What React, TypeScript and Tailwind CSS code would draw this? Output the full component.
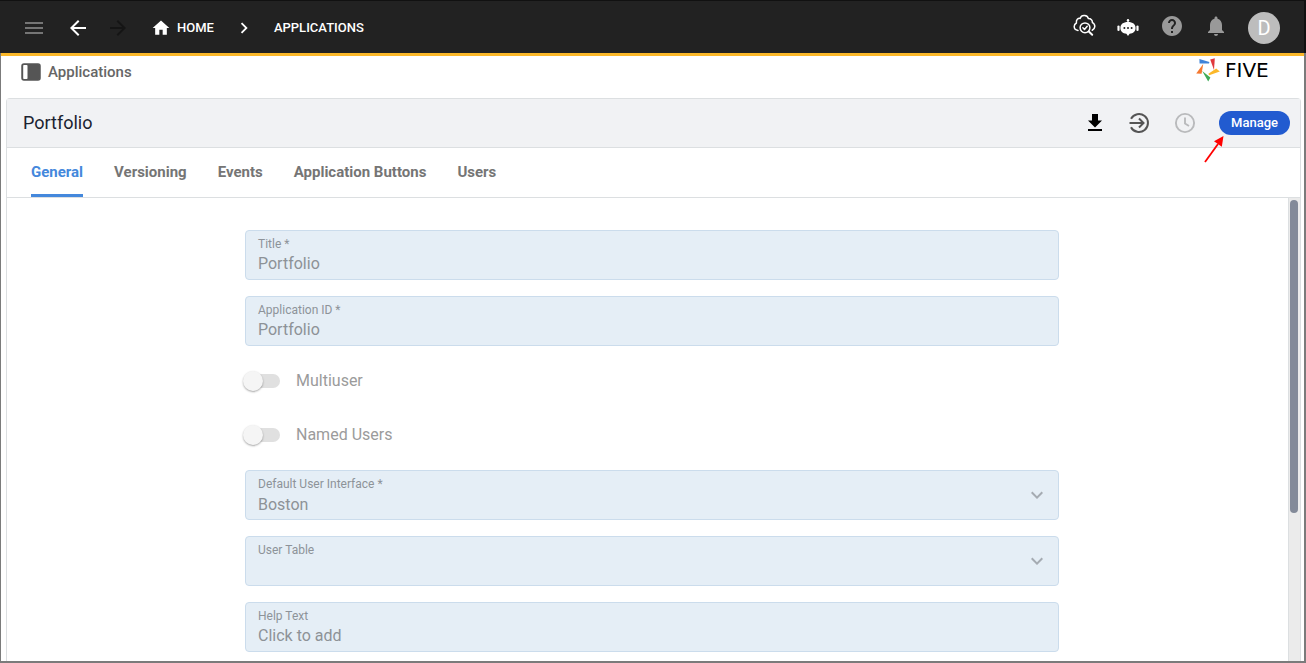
import React, { useState } from 'react';
import {
  MdArrowBack,
  MdArrowForward,
  MdChevronRight,
  MdExpandMore,
  MdHelp,
  MdHome,
  MdMenu,
  MdNotifications,
} from 'react-icons/md';

const tabs = ['General', 'Versioning', 'Events', 'Application Buttons', 'Users'];

const CloudSearchIcon = () => (
  <svg width="24" height="24" viewBox="0 0 24 24" fill="none" stroke="white" strokeWidth="1.5" strokeLinecap="round" strokeLinejoin="round">
    <path d="M6 16.400C3.800 16.200 2.200 14.600 2.200 12.600C2.200 10.800 3.200 9.600 4.400 9C4 5.800 6 4 8.200 4.400C8.800 2.400 10.600 1.400 12.600 1.600C14.600 1.800 16 3 16.400 4.600C19 4.600 20.600 6.400 20.400 8.600C22 9.400 22.900 10.800 22.800 12.600C22.600 14.400 21.600 15.600 20.200 16.200" />
    <circle cx="13" cy="13.800" r="4.900" />
    <path d="M16.800 17.600L20.200 20.800" strokeWidth="2" />
    <path d="M10.900 13.800L12.500 15.400L15.200 12.200" />
  </svg>
);

const BotIcon = () => (
  <svg width="24" height="24" viewBox="0 0 24 24" fill="white">
    <circle cx="12" cy="6.300" r="1.200" />
    <rect x="11.400" y="6" width="1.200" height="4" />
    <path d="M12 8c4.800 0 7.600 2.200 7.600 6 0 3.400-2.400 5.400-6 5.800L12 22l-1.600-2.200C6.800 19.400 4.400 17.400 4.400 14 4.400 10.200 7.200 8 12 8z" />
    <rect x="1.400" y="11.400" width="2.200" height="5.600" rx="1.100" />
    <rect x="20.400" y="11.400" width="2.200" height="5.600" rx="1.100" />
    <g fill="#222222">
      <circle cx="8.400" cy="14" r="1" />
      <circle cx="12" cy="14" r="1" />
      <circle cx="15.600" cy="14" r="1" />
    </g>
  </svg>
);

const PanelIcon = () => (
  <svg width="20" height="18" viewBox="0 0 20 18">
    <rect x="1" y="1" width="18" height="16" rx="2" fill="#555555" stroke="#555555" strokeWidth="1.500" />
    <rect x="2.200" y="2" width="4.300" height="14" rx="0.800" fill="white" />
  </svg>
);

const FiveMark = () => (
  <svg width="24" height="24" viewBox="0 0 24 24" className="shrink-0">
    <path d="M3.400 1L13.400 4L13 5.600L3.600 5.400z" fill="#3f83d8" />
    <path d="M18.800 0.200L18 12L14.200 1.600z" fill="#e0393e" />
    <path d="M23.800 13.600L13.200 17.200L12.400 15.800L20.200 10.600z" fill="#fbb829" />
    <path d="M6.200 13L14.400 19.400L12.200 23.600L10.800 21z" fill="#3fab58" />
    <path d="M7.200 6L5.600 15.800L0.200 15.400z" fill="#f5782f" />
  </svg>
);

const DownloadIcon = () => (
  <svg width="24" height="24" viewBox="0 0 24 24" fill="black">
    <path d="M19 9.500h-4V3H9v6.500H5l7 7z" />
    <rect x="5" y="18" width="14" height="2" />
  </svg>
);

const DeployIcon = () => (
  <svg width="24" height="24" viewBox="0 0 24 24" fill="none" stroke="#555555" strokeWidth="2">
    <path d="M4 7.800A9 9 0 1 1 4 16.200" />
    <path d="M2.500 12H16" />
    <path d="M12 7.500L16.500 12L12 16.500" />
  </svg>
);

const ClockIcon = () => (
  <svg width="24" height="24" viewBox="0 0 24 24" fill="none" stroke="#b9babc" strokeWidth="1.900">
    <circle cx="12" cy="12" r="9.100" />
    <path d="M12 6.500V12.500L16 15" />
  </svg>
);

const fieldBox = 'relative h-[50px] rounded border border-[#cbdcec] bg-[#e5eef6]';
const fieldLabel = 'absolute left-3 top-[5px] text-xs leading-4 text-[#8d9399]';
const fieldControl =
  'h-full w-full appearance-none bg-transparent px-3 text-base text-[#8d9297] opacity-100 placeholder:text-[#8d9297] outline-none';

const TextField = ({ id, label, value = '', placeholder }: { id: string, label: string, value?: string, placeholder?: string }) => (
  <div className={fieldBox}>
    <label htmlFor={id} className={fieldLabel}>{label}</label>
    <input id={id} type="text" value={value} placeholder={placeholder} disabled className={`${fieldControl} pt-4`} />
  </div>
);

const SelectField = ({ id, label, value = '' }: { id: string, label: string, value?: string }) => (
  <div className={fieldBox}>
    <label htmlFor={id} className={fieldLabel}>{label}</label>
    <select id={id} value={value} disabled className={`${fieldControl} pt-5`}>
      <option value={value}>{value}</option>
    </select>
    <MdExpandMore size={24} className="pointer-events-none absolute right-[9px] top-3 text-[#a5abb2]" />
  </div>
);

const SwitchField = ({ id, label }: { id: string, label: string }) => (
  <div className="flex h-[38px] items-center">
    <span className="relative flex h-5 w-[35px] items-center">
      <input
        id={id}
        type="checkbox"
        role="switch"
        disabled
        className="h-3.5 w-full appearance-none rounded-full bg-[#e0e0e0]"
      />
      <span className="absolute -left-0.5 top-0 size-5 rounded-full bg-[#f5f5f5] shadow-[0_1px_2px_rgba(0,0,0,0.35)]"></span>
    </span>
    <label htmlFor={id} className="ml-4 text-base text-[#9b9b9b]">{label}</label>
  </div>
);

const TopBar = () => (
  <header className="flex h-[53px] shrink-0 items-stretch justify-between border-t border-r-2 border-[#111111] bg-[#222222] pt-0.5 pl-[22px] pr-6 text-white">
    <nav className="flex items-center text-[13px] font-medium">
      <button aria-label="Menu" className="text-[#757575]"><MdMenu size={24} /></button>
      <button aria-label="Back" className="ml-5"><MdArrowBack size={24} /></button>
      <button aria-label="Forward" className="ml-4 text-[#151515]"><MdArrowForward size={24} /></button>
      <a href="#home" className="ml-[21px] flex items-center gap-1.5">
        <MdHome size={20} />
        HOME
      </a>
      <MdChevronRight size={22} className="ml-[19px]" />
      <a href="#applications" className="ml-[19px]">APPLICATIONS</a>
    </nav>
    <div className="flex items-center">
      <div className="flex items-center gap-5 pb-1">
        <button aria-label="Inspect"><CloudSearchIcon /></button>
        <button aria-label="Assistant"><BotIcon /></button>
        <button aria-label="Help" className="text-[#999999]"><MdHelp size={24} /></button>
        <button aria-label="Notifications" className="text-[#999999]"><MdNotifications size={24} /></button>
      </div>
      <button aria-label="Account" className="ml-5 size-8 rounded-full bg-[#bdbdbd] text-xl leading-8">D</button>
    </div>
  </header>
);

const App = () => {
  const [activeTab, setActiveTab] = useState('General');

  return (
    <div className="flex h-screen flex-col overflow-hidden bg-white font-[Roboto,sans-serif]">
      <TopBar />
      <div className="flex min-h-0 flex-1 flex-col border-b-2 border-l border-r-2 border-[#7b7b7b]">
        <div className="h-[3px] shrink-0 bg-[#fbb829]"></div>
        <div className="flex h-[42px] shrink-0 items-start justify-between px-5">
          <div className="flex h-8 items-center gap-[7px] text-[#666666]">
            <PanelIcon />
            <span className="text-[15px] font-medium">Applications</span>
          </div>
          <div className="flex h-7 w-[88px] items-center gap-[5px]">
            <FiveMark />
            <span className="font-['DejaVu_Sans',sans-serif] text-xl leading-6 text-black">FIVE</span>
          </div>
        </div>

        <main className="ml-[5px] mr-[3px] flex min-h-0 flex-1 flex-col rounded-t border border-b-0 border-[#dcdfe1]">
          <div className="flex h-[49px] shrink-0 items-center justify-between border-b border-[#dcdfe1] bg-[#f1f2f4] pl-4 pr-2.5">
            <h1 className="text-lg text-[#1b2230]">Portfolio</h1>
            <div className="flex items-center">
              <button aria-label="Download"><DownloadIcon /></button>
              <button aria-label="Deploy" className="ml-5"><DeployIcon /></button>
              <button aria-label="History" className="ml-[22px]"><ClockIcon /></button>
              <div className="relative ml-[22px]">
                <button className="block h-6 w-[71px] rounded-full bg-[#225bd0] text-[13px] font-medium text-white">Manage</button>
                <svg className="pointer-events-none absolute -left-4 top-6" width="22" height="28" viewBox="0 0 22 28">
                  <path d="M2 27L15 9" stroke="#ff0000" strokeWidth="1.800" />
                  <path d="M20.500 1L18.800 11.800L11 6.200z" fill="#ff0000" />
                </svg>
              </div>
            </div>
          </div>

          <div role="tablist" className="flex h-[50px] shrink-0 items-stretch gap-[31px] border-b border-[#dcdfe1] pl-6">
            {tabs.map((tab) => (
              <button
                key={tab}
                role="tab"
                aria-selected={tab === activeTab}
                onClick={() => setActiveTab(tab)}
                className={
                  tab === activeTab
                    ? 'rounded-t-xs border-b-[3px] border-[#4488dc] pt-[3px] text-[15px] font-bold text-[#4488dc]'
                    : 'border-b-[3px] border-transparent pt-[3px] text-[15px] font-bold text-[#757575]'
                }
              >
                {tab}
              </button>
            ))}
          </div>

          <div className="flex min-h-0 flex-1">
            <div className="flex-1 overflow-hidden pl-[9px] pt-8">
              <form className="mx-auto flex max-w-[814px] flex-col gap-4">
                <TextField id="title" label="Title *" value="Portfolio" />
                <TextField id="applicationId" label="Application ID *" value="Portfolio" />
                <SwitchField id="multiuser" label="Multiuser" />
                <SwitchField id="namedUsers" label="Named Users" />
                <SelectField id="defaultUi" label="Default User Interface *" value="Boston" />
                <SelectField id="userTable" label="User Table" />
                <TextField id="helpText" label="Help Text" placeholder="Click to add" />
              </form>
            </div>
            <div className="w-3 border-l border-[#dcdfe1] bg-[#ebebeb] pl-px pr-0.5 pt-0.5">
              <div className="h-[68%] rounded-full bg-[#838a99]"></div>
            </div>
          </div>
        </main>
      </div>
    </div>
  );
};

export default App;
